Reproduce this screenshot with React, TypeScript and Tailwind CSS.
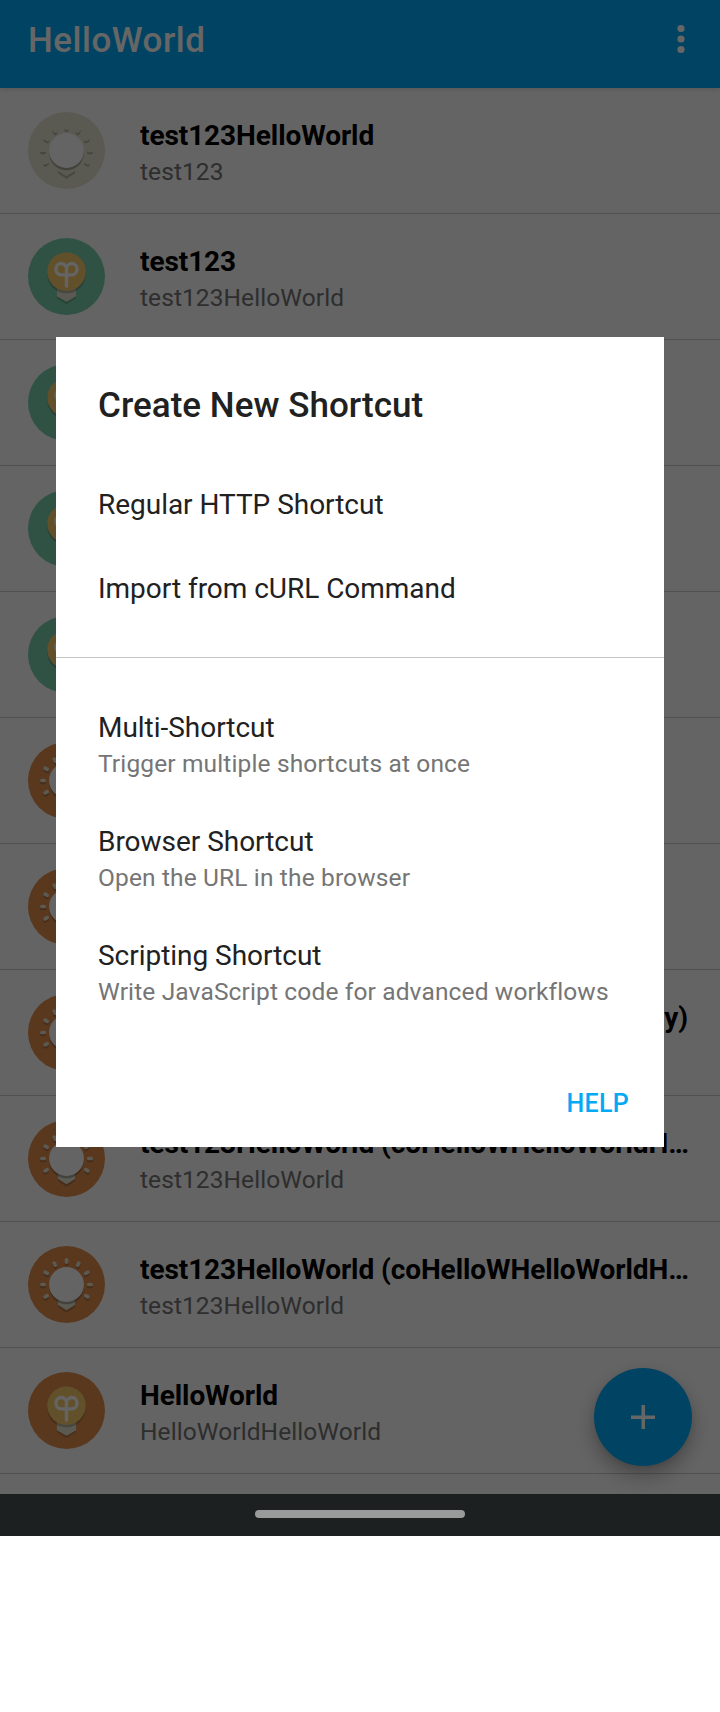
type IconKind = "sun" | "bulb";

interface Shortcut {
  title: string;
  subtitle: string;
  kind: IconKind;
  color: string;
}

const GREY = "#e0e0cc";
const GREEN = "#76cdab";
const ORANGE = "#e08d4c";

const shortcuts: Shortcut[] = [
  { title: "test123HelloWorld", subtitle: "test123", kind: "sun", color: GREY },
  { title: "test123", subtitle: "test123HelloWorld", kind: "bulb", color: GREEN },
  { title: "test123", subtitle: "test123HelloWorld", kind: "bulb", color: GREEN },
  { title: "test123", subtitle: "test123HelloWorld", kind: "bulb", color: GREEN },
  { title: "test123", subtitle: "test123HelloWorld", kind: "bulb", color: GREEN },
  { title: "HelloWorld", subtitle: "test123HelloWorld", kind: "sun", color: ORANGE },
  { title: "HelloWorld", subtitle: "test123HelloWorld", kind: "sun", color: ORANGE },
  { title: "test123HelloWorld (coHelloWHelloWorlddy)", subtitle: "test123HelloWorld", kind: "sun", color: ORANGE },
  { title: "test123HelloWorld (coHelloWHelloWorldHelloWorld)", subtitle: "test123HelloWorld", kind: "sun", color: ORANGE },
  { title: "test123HelloWorld (coHelloWHelloWorldHelloWorld)", subtitle: "test123HelloWorld", kind: "sun", color: ORANGE },
  { title: "HelloWorld", subtitle: "HelloWorldHelloWorld", kind: "bulb", color: ORANGE },
];

const rayAngles = [-120, -90, -60, -30, 0, 30, 60, 90, 120];

function Rays() {
  return (
    <>
      {rayAngles.map((a) => (
        <line key={a} x1="32" y1="11.5" x2="32" y2="13.5" transform={`rotate(${a} 32 32)`} />
      ))}
    </>
  );
}

function SunIcon({ color }: { color: string }) {
  return (
    <svg viewBox="0 0 64 64" className="size-[77px] shrink-0">
      <circle cx="32" cy="32" r="32" fill={color} />
      <g transform="translate(0 1.7)" opacity="0.25" stroke="#231f20" strokeWidth="3" strokeLinecap="round">
        <Rays />
      </g>
      <path d="M25 42h14v9l-7 4.5-7-4.5z" fill="#231f20" opacity="0.25" />
      <g stroke="#e0e0cc" strokeWidth="3" strokeLinecap="round">
        <Rays />
      </g>
      <path d="M25 42h14v7l-7 4.5-7-4.5z" fill="#e0e0cc" />
      <circle cx="32" cy="34" r="14.5" fill="#231f20" opacity="0.3" />
      <circle cx="32" cy="32" r="14.5" fill="#fafafa" />
    </svg>
  );
}

function BulbIcon({ color }: { color: string }) {
  return (
    <svg viewBox="0 0 64 64" className="size-[77px] shrink-0">
      <circle cx="32" cy="32" r="32" fill={color} />
      <path d="M24 42h16v8l-8 5-8-5z" fill="#231f20" opacity="0.2" />
      <path d="M24 40h16v8.500l-8 4.500-8-4.500z" fill="#e0e0cc" />
      <circle cx="32" cy="30" r="16" fill="#231f20" opacity="0.25" />
      <circle cx="32" cy="28" r="16" fill="#f5c86a" />
      <path
        d="M32 40V25.700a4.400 4.500 0 0 0-8.800 0c0 2.900 2.100 5 4.900 5h7.800c2.800 0 4.900-2.100 4.900-5a4.400 4.500 0 0 0-8.800 0"
        fill="none"
        stroke="#fafafa"
        strokeWidth="2.8"
        strokeLinecap="round"
      />
    </svg>
  );
}

function ShortcutRow({ item }: { item: Shortcut }) {
  return (
    <li className="flex h-[126px] shrink-0 gap-[35px] border-b border-[#cacaca] pr-7 pl-7">
      <div className="pt-6">{item.kind === "sun" ? <SunIcon color={item.color} /> : <BulbIcon color={item.color} />}</div>
      <div className="min-w-0 flex-1 pt-[31px]">
        <div className="truncate text-[28px] leading-[33px] font-bold tracking-[-0.08px] text-black">{item.title}</div>
        <div className="mt-[5px] truncate text-[24.5px] leading-[29px] tracking-[0.08px] text-[#737373]">{item.subtitle}</div>
      </div>
    </li>
  );
}

function Option({ title, detail }: { title: string; detail?: string }) {
  return (
    <div className={detail ? "h-[114px] px-[42px]" : "h-[84px] px-[42px]"}>
      <div className="text-[28px] leading-[33px] tracking-[-0.03px] text-[#212121]">{title}</div>
      {detail && (
        <div className="mt-[5px] text-[24.5px] leading-[29px] tracking-[0.14px] whitespace-nowrap text-[#757575]">
          {detail}
        </div>
      )}
    </div>
  );
}

export default function App() {
  return (
    <div className="h-[1712px] w-[720px] overflow-hidden bg-white font-['Roboto',sans-serif]">
      <div className="relative flex h-[1494px] flex-col overflow-hidden bg-[#fafafa]">
        <header className="z-1 flex h-[88px] shrink-0 items-start justify-between bg-[#03a9f4] px-7 pt-5 shadow-[0_1px_5px_rgba(0,0,0,0.15)]">
          <h1 className="text-[35px] leading-[41px] font-medium tracking-[0.5px] text-white">HelloWorld</h1>
          <svg viewBox="0 0 22 41" className="h-[41px] w-[22px]" fill="#fff">
            <circle cx="11" cy="8.500" r="3.600" />
            <circle cx="11" cy="19" r="3.600" />
            <circle cx="11" cy="29.500" r="3.600" />
          </svg>
        </header>
        <ul className="flex flex-col">
          {shortcuts.map((item, i) => (
            <ShortcutRow key={i} item={item} />
          ))}
        </ul>
        <button className="absolute right-7 bottom-7 flex size-[98px] items-center justify-center rounded-full bg-[#03a9f4] shadow-[0_10px_20px_rgba(0,0,0,0.28),0_2px_6px_rgba(0,0,0,0.08)]">
          <svg viewBox="0 0 24 24" className="size-[24.5px]" stroke="#fff" strokeWidth="3.500">
            <path d="M12 0v24M0 12h24" />
          </svg>
        </button>
        <div className="absolute inset-0 z-10 bg-black/60 px-14 pt-[337px]">
          <section className="flex h-[810px] flex-col bg-white pt-12">
            <h2 className="px-[42px] text-[35px] leading-[41px] font-medium tracking-[0.03px] text-[#212121]">
              Create New Shortcut
            </h2>
            <div className="mt-[62px] h-[170px] border-b border-[#c6c6c6]">
              <Option title="Regular HTTP Shortcut" />
              <Option title="Import from cURL Command" />
            </div>
            <div className="pt-[53px]">
              <Option title="Multi-Shortcut" detail="Trigger multiple shortcuts at once" />
              <Option title="Browser Shortcut" detail="Open the URL in the browser" />
              <Option title="Scripting Shortcut" detail="Write JavaScript code for advanced workflows" />
            </div>
            <div className="mt-9 flex justify-end pr-[35px]">
              <button className="text-[25px] leading-[29px] font-medium tracking-[0.3px] text-[#03a9f4]">HELP</button>
            </div>
          </section>
        </div>
      </div>
      <nav className="flex h-[42px] items-start justify-center bg-[#1c2020] pt-4">
        <div className="h-2 w-[210px] rounded-full bg-[#989b99]" />
      </nav>
    </div>
  );
}
